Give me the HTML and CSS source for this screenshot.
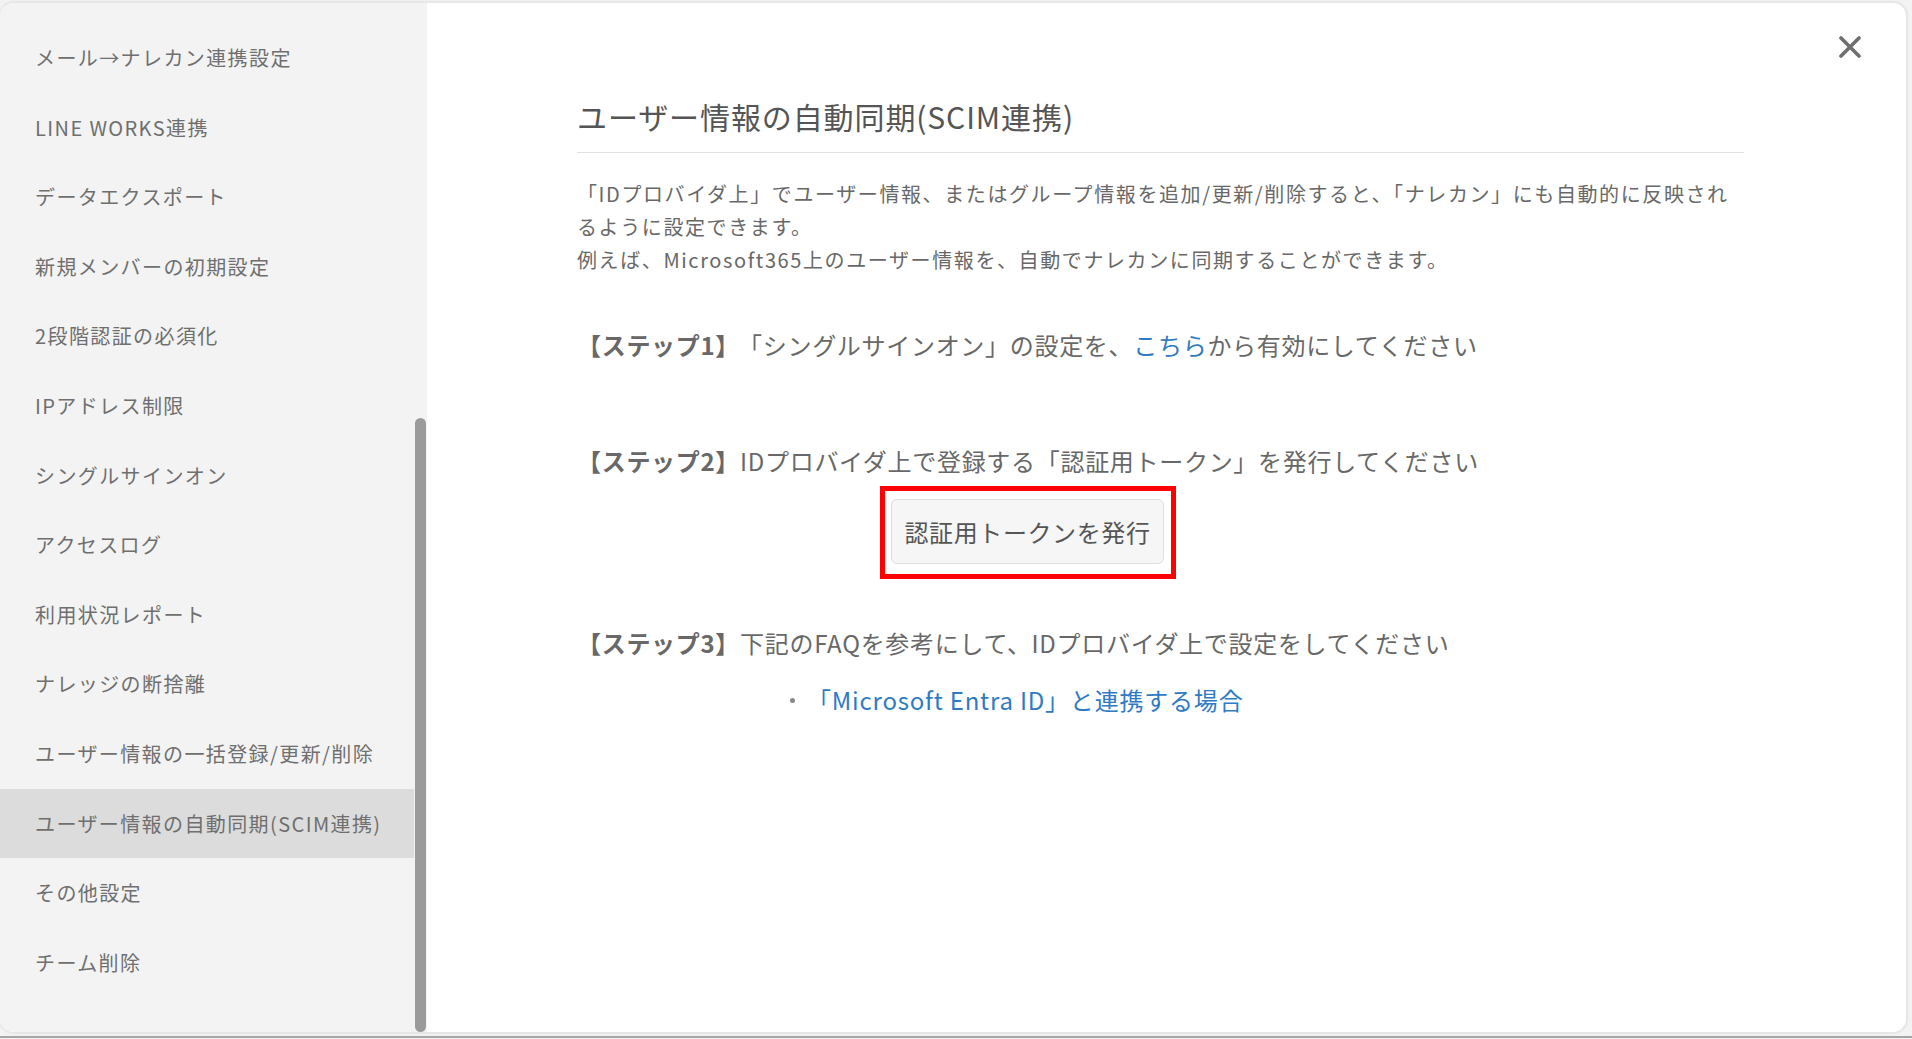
FILE: index.html
```html
<!DOCTYPE html>
<html lang="ja">
<head>
    <meta charset="UTF-8">
    <meta name="viewport" content="width=device-width, initial-scale=1.0">
    <title>ユーザー情報の自動同期(SCIM連携)</title>
    <link rel="stylesheet" href="styles.css">
</head>
<body>
    <div class="modal">
        <aside class="sidebar">
            <ul class="menu">
                <li class="menu-item">メール→ナレカン連携設定</li>
                <li class="menu-item">LINE WORKS連携</li>
                <li class="menu-item">データエクスポート</li>
                <li class="menu-item">新規メンバーの初期設定</li>
                <li class="menu-item">2段階認証の必須化</li>
                <li class="menu-item">IPアドレス制限</li>
                <li class="menu-item">シングルサインオン</li>
                <li class="menu-item">アクセスログ</li>
                <li class="menu-item">利用状況レポート</li>
                <li class="menu-item">ナレッジの断捨離</li>
                <li class="menu-item">ユーザー情報の一括登録/更新/削除</li>
                <li class="menu-item active">ユーザー情報の自動同期(SCIM連携)</li>
                <li class="menu-item">その他設定</li>
                <li class="menu-item">チーム削除</li>
            </ul>
            <div class="scroll-thumb"></div>
        </aside>

        <main class="main">
            <div class="content">
                <h1 class="title">ユーザー情報の自動同期(SCIM連携)</h1>
                <p class="lead">
                    「IDプロバイダ上」でユーザー情報、またはグループ情報を追加/更新/削除すると、「ナレカン」にも自動的に反映されるように設定できます。<br>
                    例えば、Microsoft365上のユーザー情報を、自動でナレカンに同期することができます。
                </p>

                <p class="step step-1"><b>【ステップ1】</b>「シングルサインオン」の設定を、<a href="#" class="link">こちら</a>から有効にしてください</p>

                <p class="step step-2"><b>【ステップ2】</b>IDプロバイダ上で登録する「認証用トークン」を発行してください</p>
                <div class="token-box">
                    <button type="button" class="token-button">認証用トークンを発行</button>
                </div>

                <p class="step step-3"><b>【ステップ3】</b>下記のFAQを参考にして、IDプロバイダ上で設定をしてください</p>
                <ul class="faq-list">
                    <li class="faq-item"><span class="dot"></span><a href="#" class="link">「Microsoft Entra ID」と連携する場合</a></li>
                </ul>
            </div>
        </main>

        <button type="button" class="close" aria-label="閉じる">
            <svg width="22" height="22" viewBox="0 0 22 22">
                <path d="M2 2 L20 20 M20 2 L2 20" stroke="#6f6f6f" stroke-width="3.6" stroke-linecap="round" fill="none"/>
            </svg>
        </button>
    </div>
    <div class="backdrop-edge"></div>
</body>
</html>
```

FILE: styles.css
```css
:root {
    --page-bg: #f3f3f3;
    --side-bg: #f3f3f3;
    --side-active: #dcdcdc;
    --text-color: #686868;
    --title-color: #555555;
    --link-color: #2f7bc3;
    --line-color: #e2e2e2;
}

html, body {
    margin: 0;
    padding: 0;
    height: 1039px;
    overflow: hidden;
    background-color: var(--page-bg);
}

body {
    font-family: "Noto Sans CJK JP", "Noto Sans", sans-serif;
    color: var(--text-color);
}

.modal {
    position: relative;
    display: flex;
    height: 1031px;
    margin: 2px 5px 0 0;
    background-color: #fff;
    border: 1px solid #e6e6e6;
    border-left: none;
    box-sizing: border-box;
    border-radius: 14px;
    overflow: hidden;
    box-shadow: 0 0 3px rgba(0, 0, 0, 0.12);
}

.backdrop-edge {
    height: 2px;
    margin-top: 3px;
    background-color: #a6a6a6;
}

/* サイドメニュー */
.sidebar {
    position: relative;
    flex: 0 0 427px;
    background-color: var(--side-bg);
}

.menu {
    list-style: none;
    margin: 0;
    padding: 20px 13px 0 0;
}

.menu-item {
    height: 69.6px;
    line-height: 69.6px;
    padding-left: 35px;
    font-size: 20px;
    letter-spacing: 1.4px;
    color: #6f6f6f;
    white-space: nowrap;
}

.menu-item.active {
    background-color: var(--side-active);
}

.scroll-thumb {
    position: absolute;
    right: 1px;
    top: 415px;
    bottom: 0;
    width: 11px;
    border-radius: 6px;
    background-color: #9b9b9b;
}

/* メイン */
.main {
    flex: 1;
    padding: 91px 0 0 150px;
}

.content {
    width: 1167px;
}

.title {
    margin: 0;
    padding-bottom: 13px;
    border-bottom: 1px solid var(--line-color);
    font-size: 30px;
    font-weight: normal;
    line-height: 45px;
    letter-spacing: 0.9px;
    color: var(--title-color);
}

.lead {
    margin: 24px 0 0;
    font-size: 20px;
    line-height: 33px;
    letter-spacing: 1.6px;
}

.step {
    margin: 0;
    font-size: 24px;
    line-height: 36px;
    letter-spacing: 0.7px;
}

.step b {
    font-weight: bold;
}

.step-1 b {
    margin-right: 10px;
}

.step-1 {
    margin-top: 51px;
}

.step-2 {
    margin-top: 80px;
}

.step-3 {
    margin-top: 46px;
}

.link {
    color: var(--link-color);
    text-decoration: none;
}

.token-box {
    display: inline-block;
    margin: 7px 0 0 303px;
    padding: 8px 7px 10px 6px;
    border: 5px solid #ff0000;
}

.token-button {
    display: block;
    width: 273px;
    height: 65px;
    padding: 0;
    border: 1px solid #dedede;
    border-radius: 6px;
    background-color: #f6f6f6;
    font-family: inherit;
    font-size: 24px;
    letter-spacing: 0.6px;
    color: #555;
}

.faq-list {
    list-style: none;
    margin: 21px 0 0;
    padding: 0 0 0 213px;
}

.faq-item {
    display: flex;
    align-items: center;
    font-size: 24px;
    line-height: 36px;
    letter-spacing: 0.8px;
}

.dot {
    width: 5px;
    height: 5px;
    margin-right: 12px;
    border-radius: 50%;
    background-color: #888;
}

.close {
    position: absolute;
    top: 33px;
    right: 45px;
    padding: 0;
    border: none;
    background: none;
    line-height: 0;
    cursor: pointer;
}
```
